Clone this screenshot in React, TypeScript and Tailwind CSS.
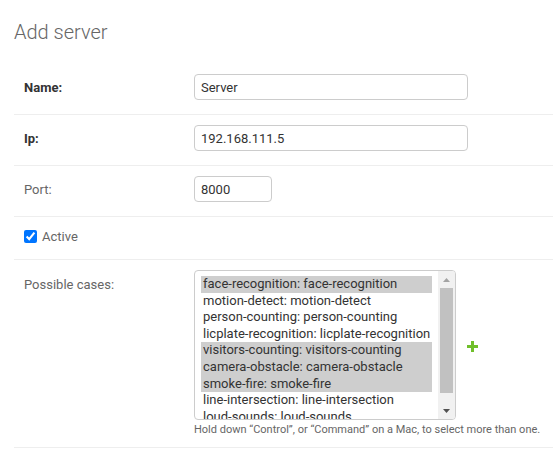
import React from 'react';

const cases = [
  { value: 'face-recognition', selected: true },
  { value: 'motion-detect', selected: false },
  { value: 'person-counting', selected: false },
  { value: 'licplate-recognition', selected: false },
  { value: 'visitors-counting', selected: true },
  { value: 'camera-obstacle', selected: true },
  { value: 'smoke-fire', selected: true },
  { value: 'line-intersection', selected: false },
  { value: 'loud-sounds', selected: false },
];

/**
 * Text field row used for name / ip / port
 */
function TextRow({
  label,
  value,
  required,
  inputClass,
}: {
  label: string;
  value: string;
  required?: boolean;
  inputClass: string;
}) {
  return (
    <div className="flex items-start h-[51px] pt-[10px] pl-[10px] border-b border-[#eee]">
      <label
        className={`w-[170px] pt-[6px] leading-[15px] ${
          required ? 'font-bold text-[#333]' : 'text-[#666]'
        }`}
      >
        {label}
      </label>
      <input
        type="text"
        defaultValue={value}
        className={`h-[26px] px-[6px] border border-[#ccc] rounded-[4px] text-[13px] text-[#333] outline-none ${inputClass}`}
      />
    </div>
  );
}

export default function App() {
  return (
    <div className="bg-white min-h-[461px] pl-[14px] text-[13px] text-[#333] font-['Roboto','Liberation_Sans',sans-serif]">
      {/* Title */}
      <h1 className="pt-[21px] mb-[20px] text-[20px] leading-[23px] font-light text-[#666]">Add server</h1>

      <TextRow label="Name:" value="Server" required inputClass="w-[274px]" />
      <TextRow label="Ip:" value="192.168.111.5" required inputClass="w-[274px]" />
      <TextRow label="Port:" value="8000" inputClass="w-[78px]" />

      {/* Active checkbox */}
      <div className="flex items-center h-[43px] pl-[10px] pb-[4px] border-b border-[#eee]">
        <input type="checkbox" defaultChecked className="w-[13px] h-[13px] m-0 accent-[#0075ff]" />
        <label className="ml-[5px] text-[#666] leading-[15px]">Active</label>
      </div>

      {/* Possible cases */}
      <div className="flex items-start h-[188px] pt-[10px] pl-[10px] border-b border-[#eee]">
        <label className="w-[170px] pt-[7px] leading-[15px] text-[#666]">Possible cases:</label>
        <div>
          <div className="flex items-center">
            <div className="flex w-[262px] h-[150px] border border-[#ccc] rounded-[4px] overflow-hidden">
              <div className="flex-1 pt-[5px] pl-[6px] pr-[6px] overflow-hidden">
                {cases.map((c) => (
                  <div
                    key={c.value}
                    className={`h-[16.6px] leading-[16.6px] px-[2px] whitespace-nowrap text-[#333] ${
                      c.selected ? 'bg-[#cecece]' : ''
                    }`}
                  >
                    {c.value}: {c.value}
                  </div>
                ))}
              </div>
              {/* Scrollbar */}
              <div className="w-[17px] flex flex-col items-center bg-[#f1f1f1]">
                <div className="h-[17px] flex items-center justify-center">
                  <svg width="7" height="4" viewBox="0 0 7 4">
                    <path d="M0 4 L3.5 0 L7 4 Z" fill="#a3a3a3" />
                  </svg>
                </div>
                <div className="w-[13px] h-[105px] bg-[#c1c1c1]" />
                <div className="flex-1" />
                <div className="h-[17px] flex items-center justify-center">
                  <svg width="7" height="4" viewBox="0 0 7 4">
                    <path d="M0 0 L7 0 L3.5 4 Z" fill="#505050" />
                  </svg>
                </div>
              </div>
            </div>
            <svg width="11" height="11" viewBox="0 0 11 11" className="ml-[11px] mt-[2px]">
              <path d="M4 0 H7 V4 H11 V7 H7 V11 H4 V7 H0 V4 H4 Z" fill="#70bf2b" />
            </svg>
          </div>
          <p className="mt-[3px] text-[11px] leading-[13px] text-[#666]">
            Hold down “Control”, or “Command” on a Mac, to select more than one.
          </p>
        </div>
      </div>
    </div>
  );
}
